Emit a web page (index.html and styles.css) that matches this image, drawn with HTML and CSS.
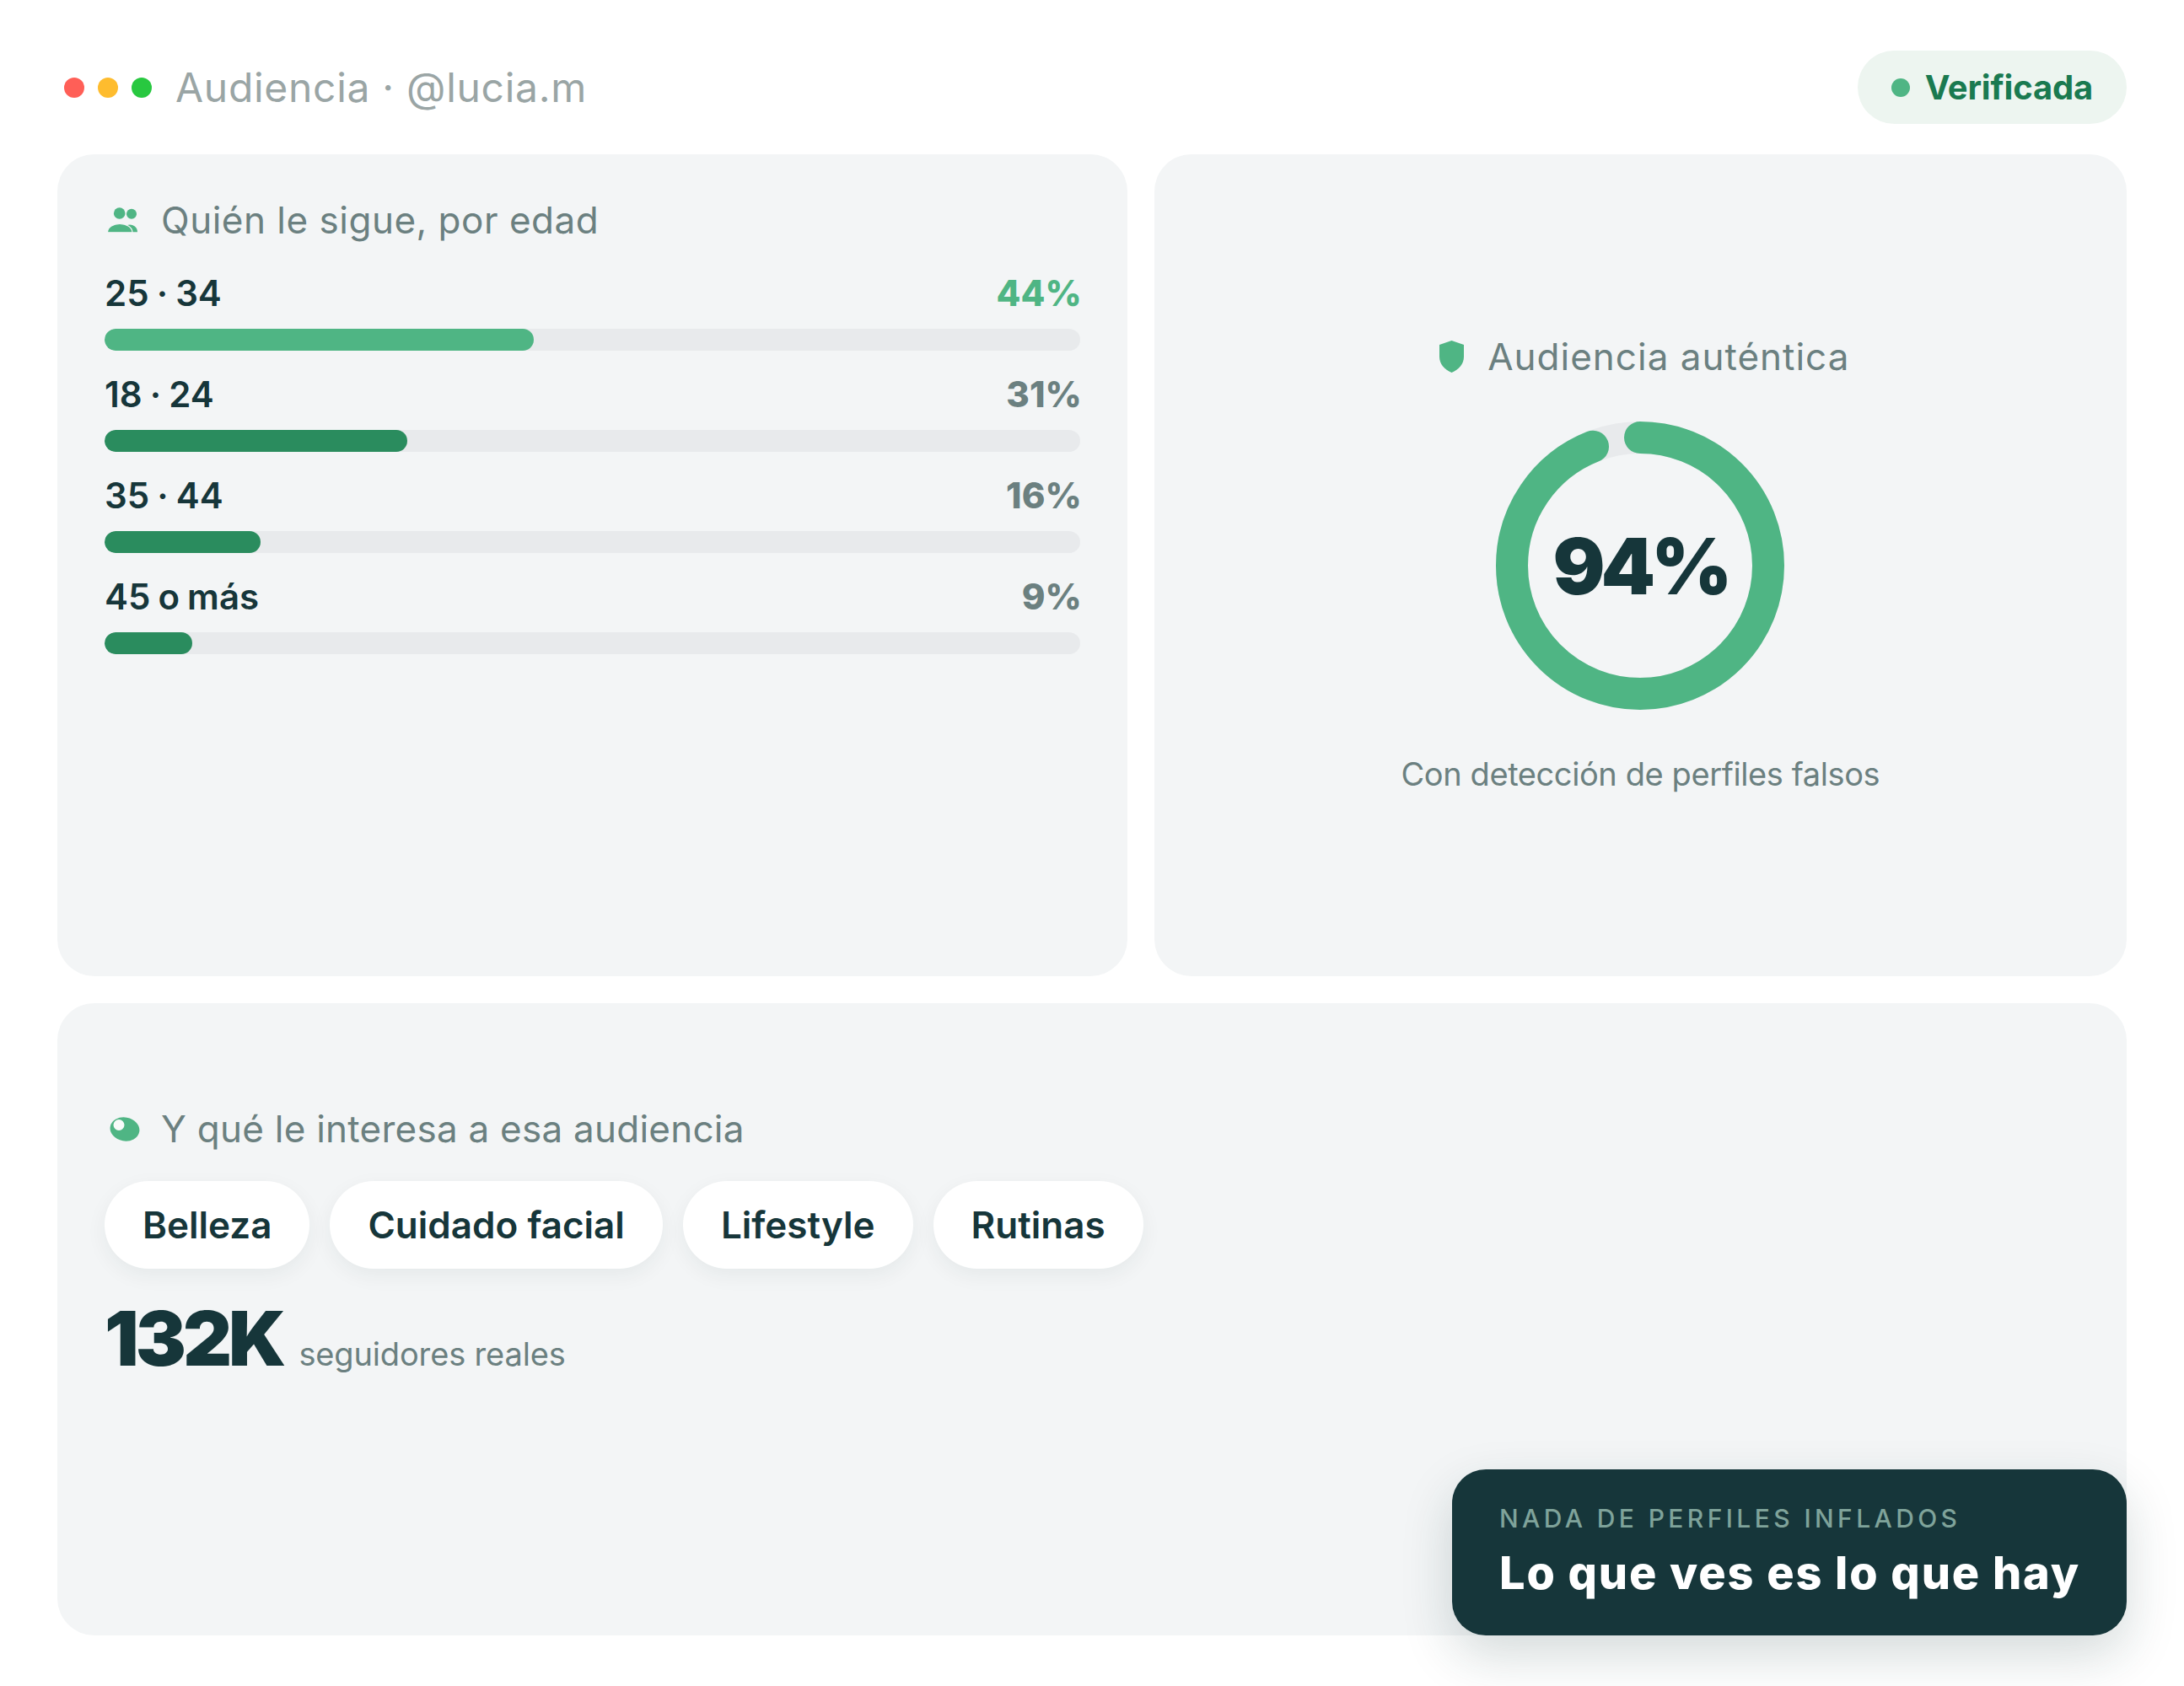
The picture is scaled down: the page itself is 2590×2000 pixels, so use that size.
FILE: index.html
```html
<!DOCTYPE html>
<html lang="es">
<head>
    <meta charset="UTF-8">
    <title>Audiencia</title>
    <link rel="stylesheet" href="styles.css">
</head>
<body>
    <div class="page">
        <div class="topbar">
            <div class="topbar-left">
                <span class="dot dot-red"></span>
                <span class="dot dot-yellow"></span>
                <span class="dot dot-green"></span>
                <span class="topbar-title">Audiencia · @lucia.m</span>
            </div>
            <div class="status"><span class="status-dot"></span>Verificada</div>
        </div>

        <div class="grid">
            <div class="card card-ages">
                <div class="card-title">
                    <svg class="icon icon-people" viewBox="0 0 35 30">
                        <circle cx="13.700" cy="7" r="6.800" fill="#4fb584"/>
                        <circle cx="28" cy="7.700" r="6" fill="#4fb584"/>
                        <path d="M17 29.300C17 24 21 20.500 26 20.500S35 24 35 29.300z" fill="#4fb584"/>
                        <path d="M-.5 29.800C-.5 23.500 6 19.500 14 19.500S29 23.500 29 29.800z" fill="#4fb584" stroke="#f3f5f6" stroke-width="1.200"/>
                    </svg>
                    Quién le sigue, por edad
                </div>
                <div class="age-row">
                    <div class="age-head"><span>25 · 34</span><span class="age-pct age-pct-top">44%</span></div>
                    <div class="track"><div class="fill fill-top" style="width: 44%"></div></div>
                </div>
                <div class="age-row">
                    <div class="age-head"><span>18 · 24</span><span class="age-pct">31%</span></div>
                    <div class="track"><div class="fill" style="width: 31%"></div></div>
                </div>
                <div class="age-row">
                    <div class="age-head"><span>35 · 44</span><span class="age-pct">16%</span></div>
                    <div class="track"><div class="fill" style="width: 16%"></div></div>
                </div>
                <div class="age-row">
                    <div class="age-head"><span>45 o más</span><span class="age-pct">9%</span></div>
                    <div class="track"><div class="fill" style="width: 9%"></div></div>
                </div>
            </div>

            <div class="card card-auth">
                <div class="card-title">
                    <svg class="icon icon-shield" viewBox="0 0 29 38">
                        <path d="M14.500 0L29 5v14c0 9-6 15.500-14.500 19C6 34.500 0 28 0 19V5z" fill="#4fb584"/>
                    </svg>
                    Audiencia auténtica
                </div>
                <div class="donut">
                    <svg viewBox="0 0 342 342">
                        <circle cx="171" cy="171" r="152" fill="none" stroke="#e8eaec" stroke-width="38"/>
                        <circle class="donut-arc" cx="171" cy="171" r="152" fill="none" stroke="#4fb584" stroke-width="38" stroke-linecap="round" pathLength="100" stroke-dasharray="94 100"/>
                    </svg>
                    <div class="donut-value">94%</div>
                </div>
                <div class="auth-note">Con detección de perfiles falsos</div>
            </div>

            <div class="card card-interests">
                <div class="card-title">
                    <svg class="icon icon-blob" viewBox="0 0 36 29">
                        <ellipse cx="18" cy="14.500" rx="17.500" ry="14" fill="#4fb584" transform="rotate(10 18 14.500)"/>
                        <circle cx="11" cy="9.500" r="6.500" fill="#f7fbf9"/>
                    </svg>
                    Y qué le interesa a esa audiencia
                </div>
                <div class="chips">
                    <div class="chip">Belleza</div>
                    <div class="chip">Cuidado facial</div>
                    <div class="chip">Lifestyle</div>
                    <div class="chip">Rutinas</div>
                </div>
                <div class="total">
                    <span class="total-num">132K</span>
                    <span class="total-label">seguidores reales</span>
                </div>
                <div class="toast">
                    <div class="toast-over">NADA DE PERFILES INFLADOS</div>
                    <div class="toast-main">Lo que ves es lo que hay</div>
                </div>
            </div>
        </div>
    </div>
</body>
</html>
```

FILE: styles.css
```css
* {
    margin: 0;
    padding: 0;
    box-sizing: border-box;
}

body {
    font-family: 'Inter', 'Liberation Sans', sans-serif;
    background: #fff;
    color: #16363a;
}

.page {
    height: 2000px;
    padding: 60px 68px;
    display: flex;
    flex-direction: column;
}

.topbar {
    display: flex;
    justify-content: space-between;
    align-items: center;
    height: 87px;
    margin-bottom: 36px;
    padding-left: 8px;
}

.topbar-left {
    display: flex;
    align-items: center;
    gap: 16px;
}

.dot {
    width: 24px;
    height: 24px;
    border-radius: 50%;
}

.dot-red { background: #ff5f57; }
.dot-yellow { background: #febc2e; }
.dot-green { background: #28c840; }

.topbar-title {
    margin-left: 12px;
    font-size: 48px;
    color: #9aa5a5;
    letter-spacing: 0.7px;
}

.status {
    display: flex;
    align-items: center;
    gap: 18px;
    height: 87px;
    padding: 0 40px;
    border-radius: 44px;
    background: #edf5f0;
    color: #1a7a50;
    font-size: 40px;
    font-weight: 700;
    letter-spacing: -0.2px;
}

.status-dot {
    width: 22px;
    height: 22px;
    border-radius: 50%;
    background: #4fb584;
}

.grid {
    flex: 1;
    display: grid;
    grid-template-columns: 1.1fr 1fr;
    grid-template-rows: 975px 750px;
    gap: 32px;
}

.card {
    background: #f3f5f6;
    border-radius: 44px;
    padding: 56px;
    position: relative;
}

.card-title {
    display: flex;
    align-items: center;
    gap: 28px;
    font-size: 44px;
    line-height: 44px;
    color: #6b8080;
    letter-spacing: 0.5px;
}

.icon-people { width: 35px; height: 30px; margin-left: 4px; }
.icon-shield { width: 29px; height: 38px; }
.icon-blob { width: 36px; height: 29px; margin-left: 6px; margin-right: -3px; }

.card-ages .card-title {
    margin-bottom: 22px;
}

.age-row {
    height: 120px;
    padding-top: 20px;
}

.age-head {
    display: flex;
    justify-content: space-between;
    align-items: center;
    height: 44px;
    font-size: 42px;
    font-weight: 600;
    word-spacing: -1.5px;
    margin-bottom: 21px;
}

.age-pct {
    font-weight: 800;
    color: #6b8080;
    margin-right: -2px;
}

.age-pct-top {
    color: #4fb584;
}

.track {
    height: 26px;
    border-radius: 13px;
    background: #e8eaec;
    overflow: hidden;
}

.fill {
    height: 100%;
    border-radius: 13px;
    background: #2a8c5e;
}

.fill-top {
    background: #4fb584;
}

.card-auth {
    display: flex;
    flex-direction: column;
    align-items: center;
    justify-content: center;
}

.card-auth .card-title {
    margin-bottom: 55px;
    margin-left: 10px;
    letter-spacing: 1px;
}

.donut {
    position: relative;
    width: 342px;
    height: 342px;
    margin-bottom: 53px;
}

.donut svg {
    display: block;
    width: 100%;
    height: 100%;
}

.donut-arc {
    transform: rotate(-90deg);
    transform-origin: 171px 171px;
}

.donut-value {
    position: absolute;
    inset: 0;
    display: flex;
    align-items: center;
    justify-content: center;
    padding-top: 2px;
    font-size: 92px;
    font-weight: 900;
    letter-spacing: -5px;
}

.auth-note {
    font-size: 38px;
    color: #6b8080;
    letter-spacing: -0.4px;
}

.card-interests {
    grid-column: 1 / 3;
    padding-top: 127px;
}

.card-interests .card-title {
    letter-spacing: 0.25px;
}

.chips {
    display: flex;
    gap: 24px;
    margin-top: 40px;
}

.chip {
    display: flex;
    align-items: center;
    height: 104px;
    padding: 0 45px;
    border-radius: 52px;
    background: #fff;
    font-size: 44px;
    font-weight: 600;
    box-shadow: 0 8px 24px rgba(22, 54, 58, 0.06);
}

.total {
    display: flex;
    align-items: baseline;
    gap: 19px;
    margin-top: 28px;
}

.total-num {
    font-size: 90px;
    font-weight: 900;
    letter-spacing: -4px;
}

.total-label {
    font-size: 38px;
    color: #6b8080;
    letter-spacing: -0.15px;
}

.toast {
    position: absolute;
    right: 0;
    bottom: 0;
    width: 800px;
    height: 197px;
    padding: 40px 0 40px 56px;
    border-radius: 40px;
    background: #16363a;
    box-shadow: 0 24px 60px rgba(22, 54, 58, 0.18);
    white-space: nowrap;
}

.toast-over {
    font-size: 30px;
    font-weight: 500;
    letter-spacing: 4.4px;
    color: #7fa39a;
    margin-bottom: 14px;
}

.toast-main {
    font-size: 54px;
    font-weight: 800;
    letter-spacing: 1.9px;
    color: #fff;
}
```
